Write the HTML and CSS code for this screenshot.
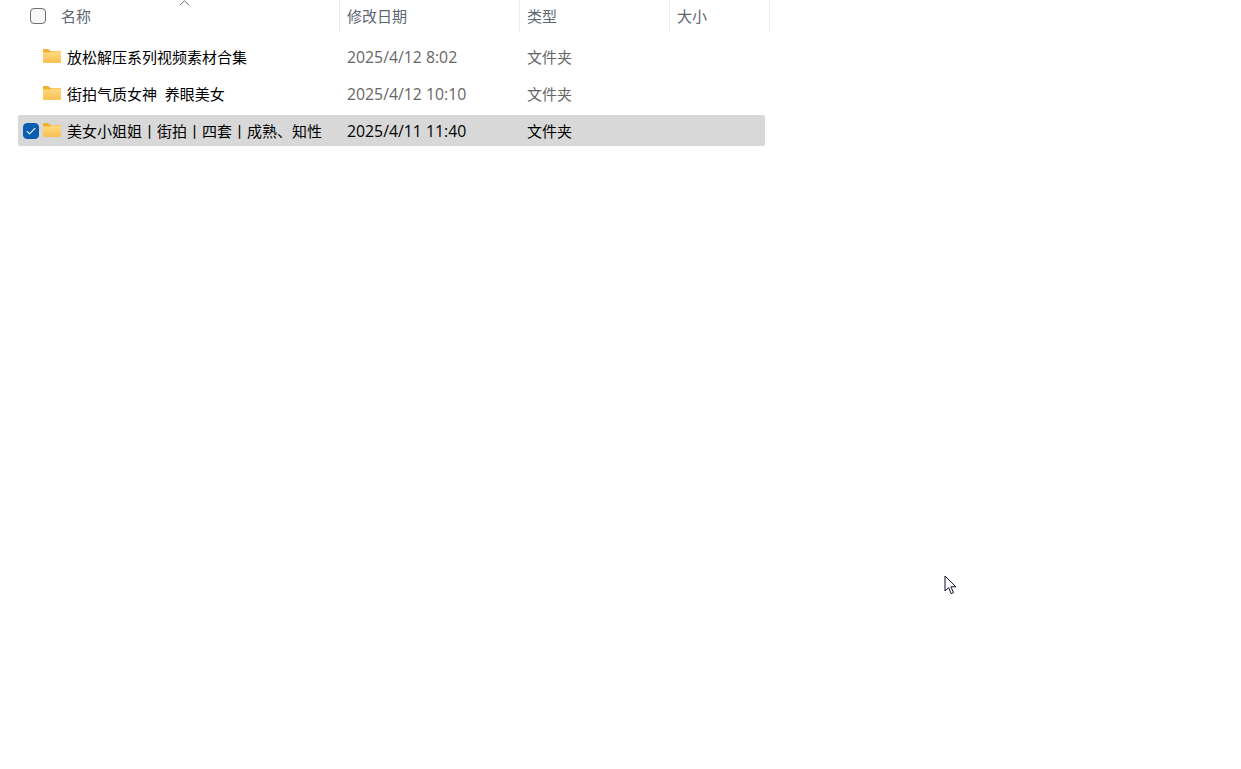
FILE: index.html
```html
<!DOCTYPE html>
<html lang="zh-CN">
<head>
    <meta charset="UTF-8">
    <meta name="viewport" content="width=device-width, initial-scale=1.0">
    <title>文件夹</title>
    <link rel="stylesheet" href="styles.css">
</head>
<body>
    <div class="file-list">
        <div class="header">
            <div class="col col-name">
                <span class="checkbox"></span>
                <span>名称</span>
                <svg class="sort-caret" width="11" height="6" viewBox="0 0 11 6"><path d="M.8 5.2 5.5.8l4.7 4.4" fill="none" stroke="#6e6e6e"/></svg>
            </div>
            <div class="col col-date">修改日期</div>
            <div class="col col-type">类型</div>
            <div class="col col-size">大小</div>
        </div>

        <div class="row">
            <div class="cell-check"></div>
            <svg class="folder" width="18" height="14" viewBox="0 0 18 14"><use href="#folder-icon"/></svg>
            <div class="name">放松解压系列视频素材合集</div>
            <div class="date">2025/4/12 8:02</div>
            <div class="type">文件夹</div>
        </div>

        <div class="row">
            <div class="cell-check"></div>
            <svg class="folder" width="18" height="14" viewBox="0 0 18 14"><use href="#folder-icon"/></svg>
            <div class="name">街拍气质女神&nbsp;&nbsp;养眼美女</div>
            <div class="date">2025/4/12 10:10</div>
            <div class="type">文件夹</div>
        </div>

        <div class="row selected">
            <div class="cell-check">
                <span class="checkbox checked">
                    <svg width="10" height="8" viewBox="0 0 10 8"><path d="M.8 4.2 3.6 6.8 9.2 1.2" fill="none" stroke="#fff" stroke-width="1.1"/></svg>
                </span>
            </div>
            <svg class="folder" width="18" height="14" viewBox="0 0 18 14"><use href="#folder-icon"/></svg>
            <div class="name">美女小姐姐丨街拍丨四套丨成熟、知性</div>
            <div class="date">2025/4/11 11:40</div>
            <div class="type">文件夹</div>
        </div>
    </div>

    <svg class="cursor" width="14" height="21" viewBox="0 0 14 21">
        <path d="M1 1v15l3.6-3.4 2.6 6 2.3-1-2.6-5.8h5z" fill="#fff" stroke="#14082a" stroke-width="1"/>
    </svg>

    <svg width="0" height="0" class="defs">
        <defs>
            <linearGradient id="folder-fill" x1="0" y1="0" x2="0" y2="1">
                <stop offset="0" stop-color="#fddc85"/>
                <stop offset="1" stop-color="#f9bf50"/>
            </linearGradient>
            <g id="folder-icon">
                <path d="M0 1C0 .4.4 0 1 0h4.4l2 2H17c.6 0 1 .4 1 1v2H0z" fill="#f3b02f"/>
                <path d="M0 3.4h7.2l1.6-1H17c.6 0 1 .4 1 1V13c0 .6-.4 1-1 1H1c-.6 0-1-.4-1-1z" fill="url(#folder-fill)"/>
            </g>
        </defs>
    </svg>
</body>
</html>
```

FILE: styles.css
```css
* {
    margin: 0;
    padding: 0;
    box-sizing: border-box;
}

body {
    background: #fff;
    font-family: "Open Sans", "Noto Sans CJK SC", sans-serif;
    font-size: 15px;
    color: #000;
    height: 769px;
    overflow: hidden;
    position: relative;
}

.file-list {
    width: 770px;
}

.header {
    display: flex;
    height: 33px;
    color: #5c6670;
    margin-bottom: 8px;
}

.header .checkbox {
    margin-top: 2px;
}

.col {
    display: flex;
    align-items: center;
    padding-left: 7px;
    padding-bottom: 3px;
    border-right: 1px solid #ececec;
}

.col-name {
    position: relative;
    width: 340px;
    padding-left: 30px;
    gap: 15px;
}

.col-date {
    width: 180px;
}

.col-type {
    width: 150px;
}

.col-size {
    width: 100px;
}

.sort-caret {
    position: absolute;
    left: 179px;
    top: 0;
}

.checkbox {
    display: flex;
    align-items: center;
    justify-content: center;
    width: 16px;
    height: 16px;
    border: 1px solid #6f6f6f;
    border-radius: 4px;
    background: #f8f8f8;
}

.checkbox.checked {
    background: #0a5eb0;
    border-color: #0a5eb0;
}

.row {
    display: flex;
    align-items: center;
    width: 747px;
    height: 31px;
    margin: 0 0 6px 18px;
    border-radius: 2px;
}

.row.selected {
    background: #d8d8d8;
}

.cell-check {
    width: 25px;
    padding-left: 5px;
}

.folder {
    flex: none;
    margin-top: -1px;
}

.name {
    width: 286px;
    padding-left: 6px;
}

.date {
    width: 180px;
    font-size: 15.8px;
    color: #666;
}

.type {
    color: #666;
}

.selected .date,
.selected .type {
    color: #000;
}

.cursor {
    position: absolute;
    left: 944px;
    top: 575px;
}

.defs {
    position: absolute;
}
```
